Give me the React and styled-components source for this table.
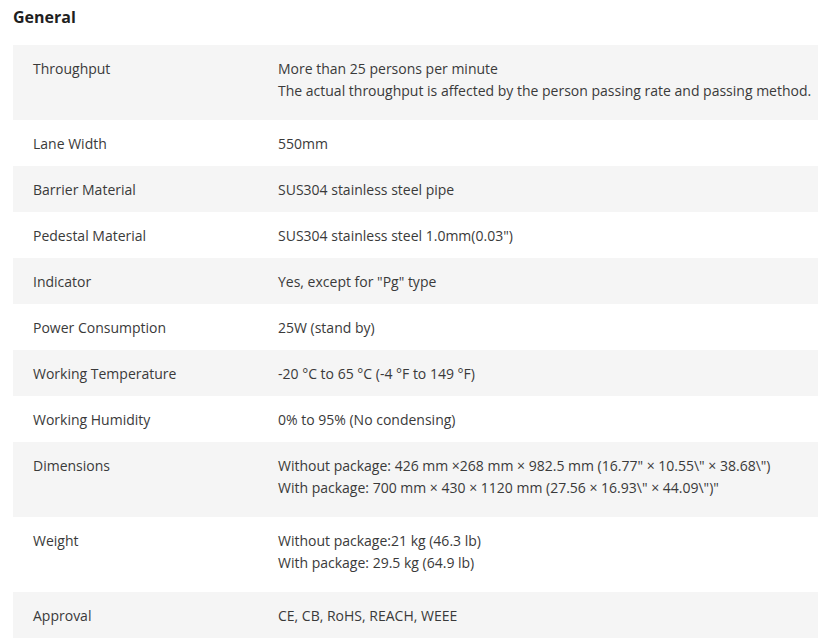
import React from 'react';
import styled, { createGlobalStyle } from 'styled-components';

const GlobalStyle = createGlobalStyle`
  body {
    margin: 0;
    background: #fff;
    font-family: "Open Sans", "Liberation Sans", sans-serif;
    color: #333;
  }
`;

const Page = styled.div`
  padding: 6px 0 0 13px;
`;

const Heading = styled.h3`
  margin: 0 0 17px;
  font-size: 16px;
  line-height: 22px;
  font-weight: 700;
  color: #1f1f1f;
`;

const Table = styled.div`
  width: 805px;
  display: flex;
  flex-direction: column;
`;

const Row = styled.div`
  display: grid;
  grid-template-columns: 245px 1fr;
  background: ${({ shaded }) => (shaded ? '#f5f5f5' : '#fff')};
  padding: 13px 0 ${({ tall }) => (tall ? '18px' : '11px')} 20px;
  font-size: 14px;
  line-height: 22px;
  color: #3a3a3a;
`;

const Label = styled.div``;

const Value = styled.div`
  white-space: nowrap;
`;

const specs = [
  ['Throughput', ['More than 25 persons per minute', 'The actual throughput is affected by the person passing rate and passing method.']],
  ['Lane Width', ['550mm']],
  ['Barrier Material', ['SUS304 stainless steel pipe']],
  ['Pedestal Material', ['SUS304 stainless steel 1.0mm(0.03")']],
  ['Indicator', ['Yes, except for "Pg" type']],
  ['Power Consumption', ['25W (stand by)']],
  ['Working Temperature', ['-20 °C to 65 °C (-4 °F to 149 °F)']],
  ['Working Humidity', ['0% to 95% (No condensing)']],
  ['Dimensions', ['Without package: 426 mm ×268 mm × 982.5 mm (16.77" × 10.55\\" × 38.68\\")', 'With package: 700 mm × 430 × 1120 mm (27.56 × 16.93\\" × 44.09\\")"']],
  ['Weight', ['Without package:21 kg (46.3 lb)', 'With package: 29.5 kg (64.9 lb)']],
  ['Approval', ['CE, CB, RoHS, REACH, WEEE']],
];

const App = () => {
  return (
    <>
      <GlobalStyle />
      <Page>
        <Heading>General</Heading>
        <Table>
          {specs.map(([label, lines], index) => (
            <Row key={label} shaded={index % 2 === 0} tall={lines.length > 1}>
              <Label>{label}</Label>
              <Value>
                {lines.map((line, i) => (
                  <div key={i}>{line}</div>
                ))}
              </Value>
            </Row>
          ))}
        </Table>
      </Page>
    </>
  );
};

export default App;
